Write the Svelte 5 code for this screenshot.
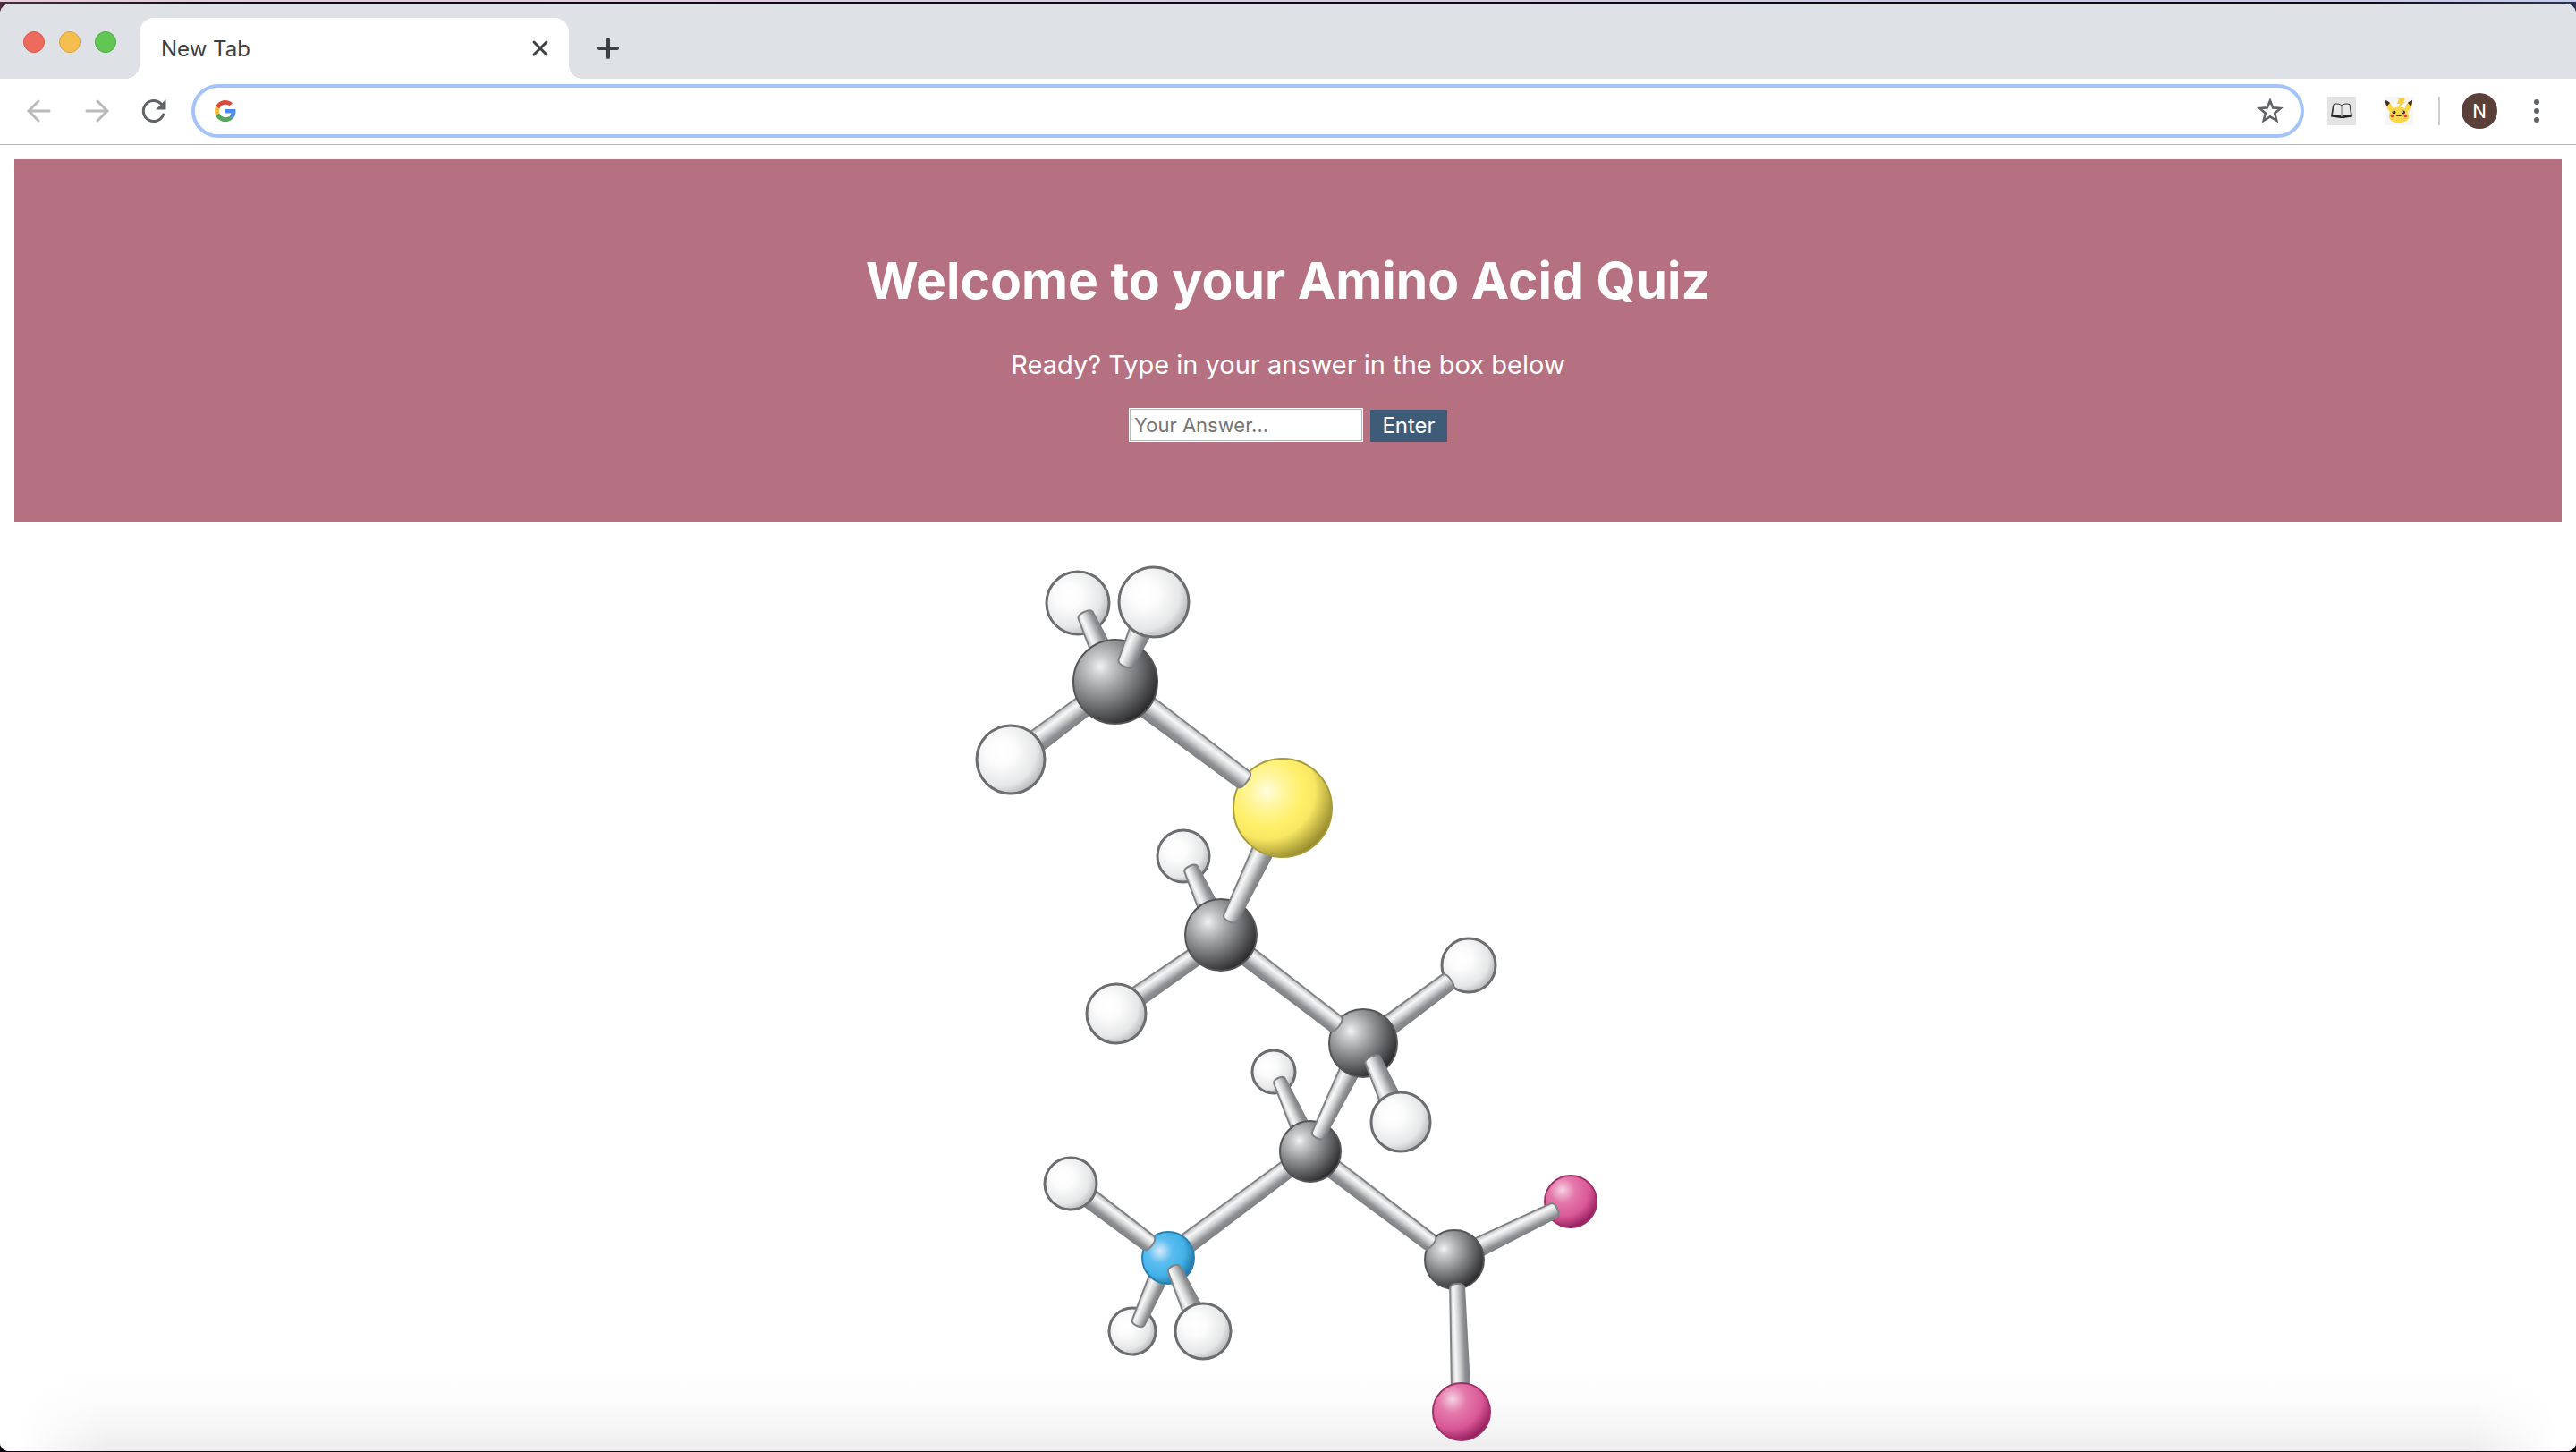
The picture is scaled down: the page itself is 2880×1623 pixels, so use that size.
<script>
  let query = $state('');
  let answer = $state('');

  const atoms = {
    h1: [1205, 673, 35, 'white'],
    h2: [1290, 672, 39, 'white'],
    h3: [1130, 848, 38, 'white'],
    c1: [1247, 761, 47, 'carbon'],
    s: [1434, 902, 55, 'sulfur'],
    h4: [1323, 956, 29, 'white'],
    h5: [1248, 1132, 33, 'white'],
    c2: [1365, 1044, 40, 'carbon'],
    h6: [1642, 1078, 30, 'white'],
    h7: [1566, 1253, 33, 'white'],
    c3: [1524, 1165, 38, 'carbon'],
    h8: [1424, 1197, 24, 'white'],
    c4: [1465, 1286, 34, 'carbon'],
    h9: [1197, 1322, 29, 'white'],
    n: [1306, 1405, 29, 'nitrogen'],
    h10: [1266, 1487, 26, 'white'],
    h11: [1345, 1487, 31, 'white'],
    c5: [1626, 1407, 33, 'carbon'],
    o1: [1756, 1342, 29, 'oxygen'],
    o2: [1634, 1577, 32, 'oxygen']
  };

  // Bond: start x, y, width, then end x, y, width. The shaded side lies to the right of travel.
  const bonds = {
    c1h1: [1234, 732, 23, 1212, 683, 18],
    c1h2: [1257, 744, 18, 1281, 690, 26],
    h3c1: [1154, 831, 25, 1218, 783, 23],
    c1s: [1276, 784, 25, 1394, 873, 22],
    c2s: [1374, 1029, 17, 1417, 939, 24],
    c2h4: [1353, 1018, 22, 1330, 967, 16],
    h5c2: [1267, 1116, 22, 1342, 1064, 20],
    c2c3: [1390, 1064, 22, 1497, 1146, 20],
    c3h6: [1549, 1148, 22, 1622, 1094, 20],
    h7c3: [1556, 1232, 23, 1533, 1180, 18],
    c4c3: [1472, 1271, 15, 1512, 1189, 22],
    c4h8: [1456, 1264, 20, 1429, 1204, 14],
    nc4: [1324, 1391, 22, 1445, 1301, 20],
    c4c5: [1485, 1301, 21, 1602, 1390, 19],
    h9n: [1214, 1335, 21, 1288, 1391, 19],
    h10n: [1271, 1481, 15, 1296, 1424, 20],
    h11n: [1336, 1469, 22, 1311, 1414, 15],
    c5o1: [1649, 1395, 21, 1741, 1350, 17],
    o2c5: [1633, 1552, 20, 1629, 1434, 16]
  };

  // Back-to-front painting order.
  const layers = [
    'h1', 'c1h1', 'h3c1', 'h3', 'h4', 'c2h4', 'h5c2', 'h5', 'h6', 'c3h6',
    'h8', 'c4h8', 'nc4', 'h10', 'h10n', 'n', 'h9n', 'h9', 'h11n', 'h11',
    'o1', 'c5o1', 'c5', 'c4c5', 'c4', 'c4c3', 'c3', 'c2c3', 'c2', 'c2s',
    's', 'c1s', 'c1', 'c1h2', 'h2', 'h7c3', 'h7', 'o2c5', 'o2'
  ];

  function bondShape([x1, y1, w1, x2, y2, w2]) {
    const length = Math.hypot(x2 - x1, y2 - y1);
    const a = w1 / 2;
    const b = w2 / 2;
    return {
      place: `translate(${x1} ${y1}) rotate(${(Math.atan2(y2 - y1, x2 - x1) * 180) / Math.PI})`,
      d: `M5 ${-a} L${length - 5} ${-b} Q${length} ${-b} ${length} 0 Q${length} ${b} ${length - 5} ${b} L5 ${a} Q0 ${a} 0 0 Q0 ${-a} 5 ${-a}Z`
    };
  }
</script>

<div class="window">
  <div class="frame">
    <header class="tabs">
      <div class="lights">
        <button class="light red" aria-label="Close window"></button>
        <button class="light amber" aria-label="Minimize window"></button>
        <button class="light green" aria-label="Zoom window"></button>
      </div>
      <div class="tab">
        <span>New Tab</span>
        <button class="icon" aria-label="Close tab">
          <svg width="24" height="24" viewBox="0 0 24 24"><path d="M5 5l14 14M19 5L5 19" stroke="#3c4043" stroke-width="3" stroke-linecap="round" /></svg>
        </button>
      </div>
      <button class="icon plus" aria-label="New tab">
        <svg width="28" height="28" viewBox="0 0 28 28"><path d="M14 4v20M4 14h20" stroke="#3c4043" stroke-width="4" stroke-linecap="round" /></svg>
      </button>
    </header>

    <nav class="toolbar">
      <button class="icon" aria-label="Back">
        <svg width="32" height="32" viewBox="0 0 32 32"><path d="M27 16H5M15 5L4 16l11 11" fill="none" stroke="#bababc" stroke-width="3" stroke-linecap="round" /></svg>
      </button>
      <button class="icon" aria-label="Forward">
        <svg width="32" height="32" viewBox="0 0 32 32"><path d="M5 16h22M17 5l11 11-11 11" fill="none" stroke="#bababc" stroke-width="3" stroke-linecap="round" /></svg>
      </button>
      <button class="icon" aria-label="Reload">
        <svg width="32" height="32" viewBox="0 0 32 32"><path d="M26.600 20A11.500 11.500 0 1 1 24 8" fill="none" stroke="#5f6368" stroke-width="3" stroke-linecap="round" /><path d="M29.500 3v11.500H18z" fill="#5f6368" /></svg>
      </button>
      <div class="omnibox">
        <svg width="24" height="24" viewBox="0 0 48 48" aria-hidden="true">
          <path fill="#dd4b3e" d="M24 9.500c3.540 0 6.710 1.220 9.210 3.600l6.850-6.850C35.900 2.380 30.470 0 24 0 14.620 0 6.510 5.380 2.560 13.220l7.980 6.190C12.430 13.720 17.740 9.500 24 9.500z" />
          <path fill="#4c8bf5" d="M46.980 24.550c0-1.570-.15-3.090-.38-4.550H24v9.020h12.940c-.58 2.960-2.260 5.480-4.780 7.180l7.730 6c4.510-4.180 7.090-10.360 7.090-17.650z" />
          <path fill="#f4b93d" d="M10.530 28.590c-.48-1.450-.76-2.990-.76-4.590s.27-3.140.76-4.590l-7.980-6.190C.92 16.460 0 20.120 0 24c0 3.880.92 7.540 2.560 10.780l7.970-6.190z" />
          <path fill="#55a65a" d="M24 48c6.480 0 11.930-2.130 15.890-5.810l-7.730-6c-2.150 1.450-4.920 2.300-8.160 2.300-6.260 0-11.570-4.220-13.470-9.910l-7.980 6.190C6.510 42.620 14.620 48 24 48z" />
        </svg>
        <input type="text" aria-label="Search or type a URL" bind:value={query} />
        <button class="icon" aria-label="Bookmark this page">
          <svg width="32" height="32" viewBox="0 0 32 32"><path d="M16 4.500l3.200 7.900 8.500.600-6.500 5.500 2.100 8.300L16 22.300l-7.300 4.500 2.100-8.300L4.300 13l8.500-.600z" fill="none" stroke="#5f6368" stroke-width="2.600" /></svg>
        </button>
      </div>
      <div class="extensions">
        <button class="icon" aria-label="Reader extension">
          <svg width="32" height="32" viewBox="0 0 32 32">
            <rect width="32" height="32" fill="#e3e3e3" />
            <path d="M6 10L4 22.500l11 1.500h3l10-1.500L26 10z" fill="#222" />
            <path d="M7 8.500c4-1 7-.500 9 1.500 2-2 5-2.500 9-1.500l1.500 12.500c-4-.800-8-.500-10.500 1.500-2.500-2-6.500-2.300-10.500-1.500z" fill="#e9e9e9" stroke="#333" />
            <path d="M16 10v12.500" stroke="#777" />
          </svg>
        </button>
        <button class="icon" aria-label="Pikachu extension">
          <svg width="32" height="32" viewBox="0 0 32 32">
            <rect width="32" height="32" fill="#f6f6f6" />
            <path d="M16 2h7l-2 4h2l-8 7 2-5h-3z" fill="#f7d13f" />
            <path d="M1 4c4 1 7 4 8 9 4-2 10-2 14 0 1-5 4-8 8-9 0 6-2 10-5 13 3 7 0 12-10 12.500C6 29 3 24 6 17 3 14 1 10 1 4z" fill="#fbd84b" />
            <path d="M1 4c2 .500 3.500 1.500 5 3l-3.500 4C1.500 9 1 7 1 4zM31 4c-2 .500-3.500 1.500-5 3l3.500 4c1-2 1.500-4 1.500-7z" fill="#3d2c26" />
            <circle cx="10.500" cy="17.500" r="2" fill="#3d2c26" /><circle cx="21" cy="17.500" r="2" fill="#3d2c26" />
            <circle cx="10" cy="17" r=".7" fill="#fff" /><circle cx="20.500" cy="17" r=".7" fill="#fff" />
            <circle cx="8.500" cy="21.500" r="1.800" fill="#e8402c" /><circle cx="23.500" cy="21.500" r="1.800" fill="#e8402c" />
            <path d="M13 20c0 2 3 2 3 0 0 2 3 2 3 0" fill="none" stroke="#3d2c26" stroke-width="1.200" />
          </svg>
        </button>
      </div>
      <span class="divider"></span>
      <button class="avatar" aria-label="Profile N">N</button>
      <button class="icon" aria-label="Menu">
        <svg width="32" height="32" viewBox="0 0 32 32" fill="#5f6368"><circle cx="16" cy="6" r="3" /><circle cx="16" cy="16" r="3" /><circle cx="16" cy="26" r="3" /></svg>
      </button>
    </nav>

    <main>
      <section class="banner">
        <h1>Welcome to your Amino Acid Quiz</h1>
        <p>Ready? Type in your answer in the box below</p>
        <form onsubmit={(event) => event.preventDefault()}>
          <input type="text" aria-label="Your answer" placeholder="Your Answer..." bind:value={answer} />
          <button type="submit">Enter</button>
        </form>
      </section>

      <svg class="molecule" viewBox="1060 610 760 1010" role="img" aria-label="Ball-and-stick model of an amino acid">
        <defs>
          <linearGradient id="bond" x1="0" y1="0" x2="0" y2="1">
            <stop offset="0" stop-color="#b5b7b9" />
            <stop offset=".28" stop-color="#f8f8f8" />
            <stop offset=".5" stop-color="#d2d4d5" />
            <stop offset=".8" stop-color="#8b8d90" />
            <stop offset="1" stop-color="#85878a" />
          </linearGradient>
          <radialGradient id="white" cx=".36" cy=".38" r=".68">
            <stop offset="0" stop-color="#fff" />
            <stop offset=".3" stop-color="#fcfcfc" />
            <stop offset=".75" stop-color="#e6e7e8" />
            <stop offset="1" stop-color="#b4b6b8" />
          </radialGradient>
          <radialGradient id="carbon" cx=".32" cy=".32" r=".74">
            <stop offset="0" stop-color="#f2f3f3" />
            <stop offset=".14" stop-color="#cfd0d1" />
            <stop offset=".42" stop-color="#98999b" />
            <stop offset=".7" stop-color="#636466" />
            <stop offset="1" stop-color="#2a282a" />
          </radialGradient>
          <radialGradient id="sulfur" cx=".34" cy=".33" r=".72">
            <stop offset="0" stop-color="#fffde0" />
            <stop offset=".25" stop-color="#fff59a" />
            <stop offset=".5" stop-color="#fff06a" />
            <stop offset=".68" stop-color="#f7e763" />
            <stop offset="1" stop-color="#978a2c" />
          </radialGradient>
          <radialGradient id="nitrogen" cx=".34" cy=".37" r=".68">
            <stop offset="0" stop-color="#d9eaf9" />
            <stop offset=".35" stop-color="#5bbdf0" />
            <stop offset=".7" stop-color="#43b2e8" />
            <stop offset="1" stop-color="#2779a8" />
          </radialGradient>
          <radialGradient id="oxygen" cx=".34" cy=".28" r=".8">
            <stop offset="0" stop-color="#f6d3e2" />
            <stop offset=".3" stop-color="#e479ab" />
            <stop offset=".65" stop-color="#d95796" />
            <stop offset="1" stop-color="#861252" />
          </radialGradient>
        </defs>
        {#each layers as key (key)}
          {#if key in atoms}
            {@const [x, y, r, kind] = atoms[key]}
            <circle class={kind} cx={x} cy={y} {r} fill="url(#{kind})" />
          {:else}
            {@const shape = bondShape(bonds[key])}
            <path class="bond" transform={shape.place} d={shape.d} fill="url(#bond)" />
          {/if}
        {/each}
      </svg>
    </main>
  </div>
</div>

<style>
  :global(body) {
    margin: 0;
    font-family: Inter, Roboto, 'Liberation Sans', sans-serif;
  }
  .window {
    box-sizing: border-box;
    min-height: 100vh;
    display: flex;
    flex-direction: column;
    padding: 4px 0 1px;
    background: linear-gradient(90deg, #e6cdda, #c5cbe8) top / 100% 2px no-repeat,
      linear-gradient(90deg, #4a2d40, #120a18 8%, #120a18 92%, #2a3358) top / 100% 40px no-repeat, #100810;
  }
  .frame {
    flex: 1;
    display: flex;
    flex-direction: column;
    overflow: hidden;
    border-radius: 12px 12px 10px 10px;
    background: #fff;
  }
  button {
    border: 0;
    padding: 0;
    background: none;
    font: inherit;
  }
  svg {
    display: block;
  }
  .icon {
    flex: none;
  }
  .tabs {
    display: flex;
    align-items: flex-end;
    height: 84px;
    background: #dee1e6;
  }
  .lights {
    display: flex;
    gap: 16px;
    padding: 0 26px 29px;
  }
  .light {
    box-sizing: border-box;
    width: 24px;
    height: 24px;
    border-radius: 50%;
    border: 1px solid #d9574c;
    background: #ee6a5f;
  }
  .amber {
    border-color: #d9a03c;
    background: #f5bf4f;
  }
  .green {
    border-color: #50a843;
    background: #62c655;
  }
  .tab {
    position: relative;
    box-sizing: border-box;
    display: flex;
    align-items: center;
    justify-content: space-between;
    width: 480px;
    height: 68px;
    padding: 0 20px 0 24px;
    border-radius: 16px 16px 0 0;
    background: #fff;
    color: #3c4043;
    font-size: 24px;
  }
  .tab::before,
  .tab::after {
    content: '';
    position: absolute;
    bottom: 0;
    width: 16px;
    height: 16px;
  }
  .tab::before {
    right: 100%;
    background: radial-gradient(circle at 0 0, transparent 16px, #fff 16px);
  }
  .tab::after {
    left: 100%;
    background: radial-gradient(circle at 100% 0, transparent 16px, #fff 16px);
  }
  .plus {
    padding: 0 30px 20px;
  }
  .toolbar {
    display: flex;
    align-items: center;
    gap: 32px;
    height: 72px;
    padding: 0 28px 1px;
    border-bottom: 1px solid #b4b5b7;
  }
  .omnibox {
    flex: 1;
    box-sizing: border-box;
    display: flex;
    align-items: center;
    gap: 16px;
    height: 60px;
    margin-left: -6px;
    padding: 0 18px 0 22px;
    border: 4px solid #a3c3f9;
    border-radius: 30px;
  }
  .omnibox input {
    flex: 1;
    min-width: 0;
    border: 0;
    outline: 0;
    background: none;
    font: inherit;
    font-size: 24px;
  }
  .extensions {
    display: flex;
    gap: 32px;
    margin: 0 -4px 0 -6px;
  }
  .divider {
    width: 2px;
    height: 32px;
    background: #cdcdcf;
    margin-right: -8px;
  }
  .avatar {
    width: 40px;
    height: 40px;
    border-radius: 50%;
    background: #5a4038;
    color: #fff;
    font-family: Roboto, sans-serif;
    font-size: 22px;
  }
  .avatar + .icon {
    margin-left: -4px;
  }
  main {
    flex: 1;
    padding: 16px 16px 0;
    background:
      linear-gradient(90deg, #fff 20px, transparent 120px, transparent calc(100% - 120px), #fff calc(100% - 20px)),
      linear-gradient(to top, #ececec, #f5f5f5 24px, #fcfcfc 56px, #fff 90px);
  }
  .banner {
    display: flex;
    flex-direction: column;
    align-items: center;
    padding: 100px 16px 90px;
    background: #b57082;
    color: #fff;
    text-align: center;
  }
  h1 {
    margin: 0 0 40px;
    font-size: 57px;
    line-height: 72px;
    font-weight: 700;
  }
  p {
    margin: 0 0 30px;
    font-size: 29px;
    line-height: 36px;
  }
  form {
    display: flex;
    align-items: flex-end;
    gap: 8px;
  }
  form input {
    box-sizing: border-box;
    width: 262px;
    height: 38px;
    padding: 0 4px;
    border: 2px solid #fff;
    outline: 1px solid #b9b9b9;
    outline-offset: -2px;
    background: #fff;
    font: inherit;
    font-size: 22px;
  }
  form input::placeholder {
    color: #757575;
    opacity: 1;
  }
  form button {
    width: 86px;
    height: 36px;
    background: #3e5b78;
    color: #fff;
    font-size: 24px;
    line-height: 36px;
  }
  .molecule {
    width: 760px;
    max-width: 100%;
    margin: 27px auto 0;
  }
  .molecule circle {
    stroke: #6b6d70;
    stroke-width: 3px;
  }
  .molecule .carbon {
    stroke: #545557;
    stroke-width: 2px;
  }
  .molecule .sulfur {
    stroke: #a99c3c;
    stroke-width: 2px;
  }
  .molecule .nitrogen {
    stroke: #2a80b0;
    stroke-width: 2px;
  }
  .molecule .oxygen {
    stroke: #a03068;
    stroke-width: 2px;
  }
  .bond {
    stroke: #808285;
    stroke-width: 2px;
  }
</style>
